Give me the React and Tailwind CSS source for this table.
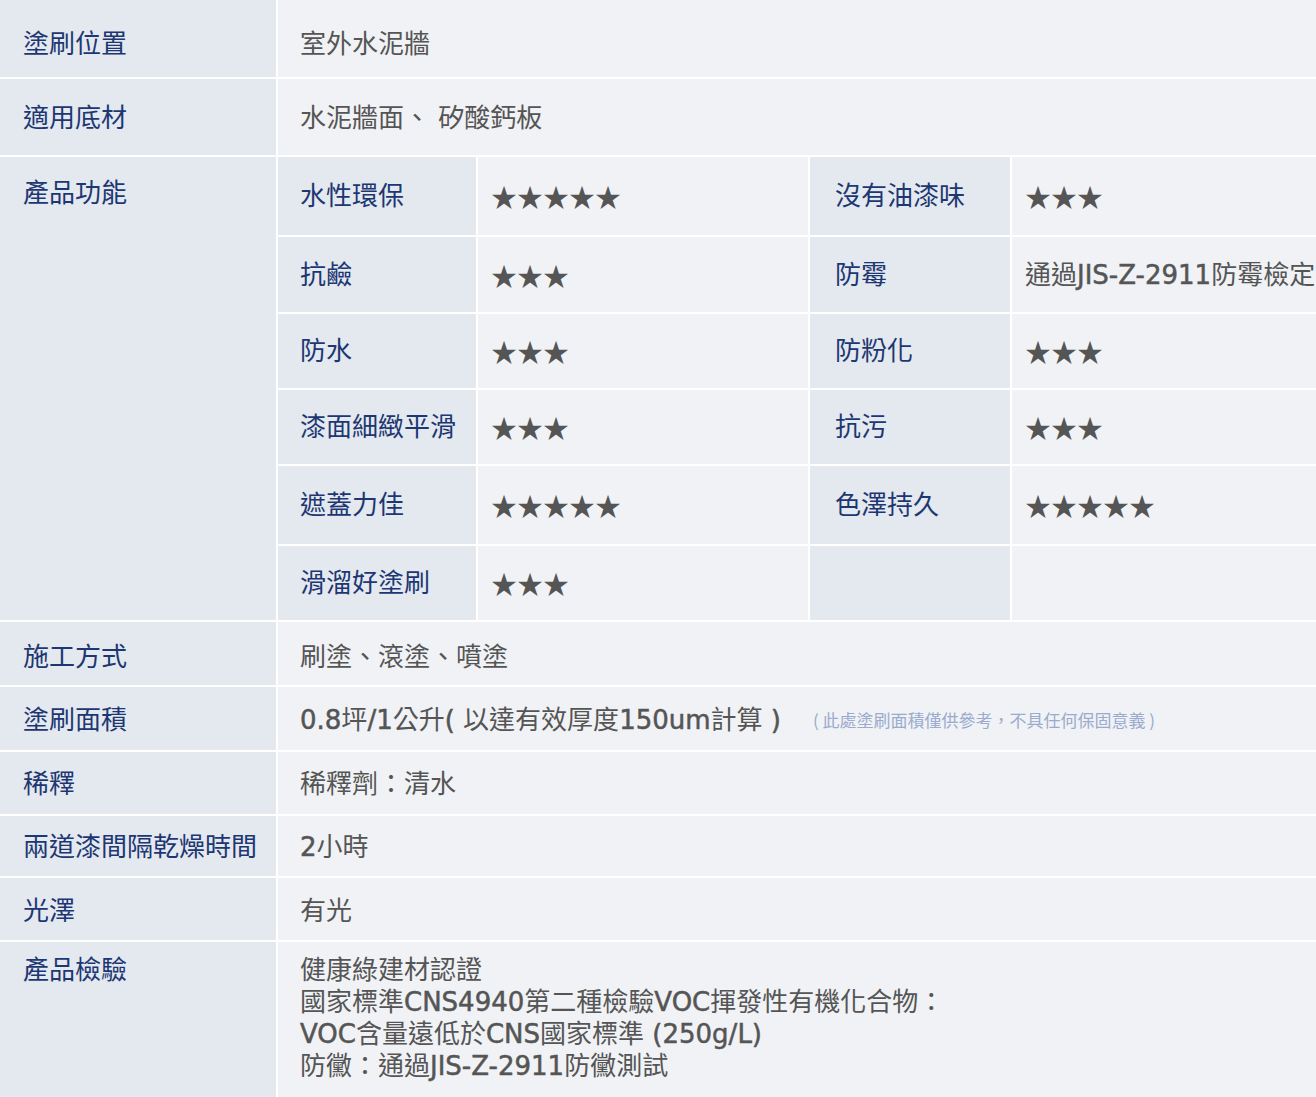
import React from "react";

const features = [
  { name: "水性環保", stars: 5, h: "h-[78px]" },
  { name: "沒有油漆味", stars: 3, h: "h-[78px]" },
  { name: "抗鹼", stars: 3, h: "h-[75px]" },
  { name: "防霉", text: "通過JIS-Z-2911防霉檢定", h: "h-[75px]" },
  { name: "防水", stars: 3, h: "h-[74px]" },
  { name: "防粉化", stars: 3, h: "h-[74px]" },
  { name: "漆面細緻平滑", stars: 3, h: "h-[74px]" },
  { name: "抗污", stars: 3, h: "h-[74px]" },
  { name: "遮蓋力佳", stars: 5, h: "h-[78px]" },
  { name: "色澤持久", stars: 5, h: "h-[78px]" },
  { name: "滑溜好塗刷", stars: 3, h: "h-[74px]" },
  { name: "", h: "h-[74px]" },
];

// latin runs look a little heavier than the CJK text in the original
const Mixed = ({ text = "" }) =>
  text.split(/([A-Za-z0-9.\/()\-]+)/).map((part, i) =>
    i % 2 ? (
      <span key={i} className="[-webkit-text-stroke:0.5px_currentColor]">
        {part}
      </span>
    ) : (
      part
    )
  );

const Stars = ({ n }) => (
  <span className="font-['Noto_Sans_CJK_TC',sans-serif] text-[26px] text-[#555]">
    {"★".repeat(n)}
  </span>
);

const Label = ({ children, className = "" }) => (
  <div className={`bg-[#e4e8ef] pl-[23px] text-[#1c3772] ${className}`}>{children}</div>
);

const Value = ({ children, className = "" }) => (
  <div className={`bg-[#f0f2f6] pl-[22px] text-[#555] whitespace-nowrap ${className}`}>{children}</div>
);

const Row = ({ label, children, h, top = false, pt = "" }) => (
  <div className={`grid grid-cols-[276px_1fr] gap-[2px] ${h}`}>
    <Label className={top ? pt : `flex items-center ${pt}`}>{label}</Label>
    <Value className={top ? pt : `flex items-center ${pt}`}>{children}</Value>
  </div>
);

const App = () => {
  return (
    <div className="w-[1316px] h-[1097px] overflow-hidden bg-white font-['DejaVu_Sans','Noto_Sans_CJK_TC',sans-serif] text-[26px] leading-[32px]">
      <div className="flex flex-col gap-[2px]">
        <Row label="塗刷位置" h="h-[77px]" pt="pt-[10px]">
          室外水泥牆
        </Row>
        <Row label="適用底材" h="h-[76px]" pt="pt-[2px]">
          水泥牆面、 矽酸鈣板
        </Row>

        {/* product features: nested 4 column grid */}
        <div className="grid grid-cols-[276px_1fr] gap-[2px]">
          <Label className="pt-[20px]">產品功能</Label>
          <div className="grid grid-cols-[198px_330px_200px_1fr] gap-[2px]">
            {features.map((f, i) => (
              <React.Fragment key={i}>
                <div className={`${f.h} bg-[#e4e8ef] flex items-center ${i % 2 ? "pl-[25px]" : "pl-[22px]"} text-[#1c3772]`}>
                  {f.name}
                </div>
                <div className={`${f.h} bg-[#f0f2f6] flex items-center pl-[13px] text-[#555] whitespace-nowrap overflow-hidden`}>
                  {f.stars ? <Stars n={f.stars} /> : <Mixed text={f.text} />}
                </div>
              </React.Fragment>
            ))}
          </div>
        </div>

        <Row label="施工方式" h="h-[63px]" pt="pt-[6px]">
          刷塗、滾塗、噴塗
        </Row>
        <Row label="塗刷面積" h="h-[63px]" pt="pt-[2px]">
          <span>
            <Mixed text="0.8坪/1公升( 以達有效厚度150um計算 )" />
          </span>
          <span className="ml-[32px] font-['Noto_Sans_CJK_TC',sans-serif] text-[17px] text-[#9aabcd]">
            ( 此處塗刷面積僅供參考，不具任何保固意義 )
          </span>
        </Row>
        <Row label="稀釋" h="h-[62px]" pt="pt-[2px]">
          稀釋劑：清水
        </Row>
        <Row label="兩道漆間隔乾燥時間" h="h-[60px]" pt="pt-[2px]">
          <Mixed text="2小時" />
        </Row>
        <Row label="光澤" h="h-[62px]" pt="pt-[4px]">
          有光
        </Row>
        <Row label="產品檢驗" h="h-[170px]" top pt="pt-[12px]">
          <div>健康綠建材認證</div>
          <div>
            <Mixed text="國家標準CNS4940第二種檢驗VOC揮發性有機化合物：" />
          </div>
          <div>
            <Mixed text="VOC含量遠低於CNS國家標準 (250g/L)" />
          </div>
          <div>
            <Mixed text="防黴：通過JIS-Z-2911防黴測試" />
          </div>
        </Row>
      </div>
    </div>
  );
};

export default App;
